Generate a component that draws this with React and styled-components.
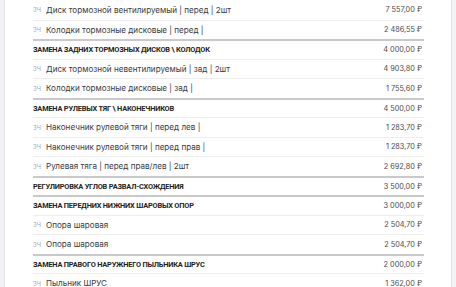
import React from "react";
import styled, { createGlobalStyle } from "styled-components";

const GlobalStyle = createGlobalStyle`
  html, body {
    margin: 0;
    padding: 0;
    background: #f3f3f6;
  }
  body {
    font-family: Inter, "Noto Sans", "Liberation Sans", sans-serif;
    -webkit-font-smoothing: antialiased;
  }
`;

const rows = [
  { type: "item", name: "Диск тормозной вентилируемый | перед | 2шт", price: "7 557,00 ₽" },
  { type: "item", name: "Колодки тормозные дисковые | перед |", price: "2 486,55 ₽" },
  { type: "group", name: "ЗАМЕНА ЗАДНИХ ТОРМОЗНЫХ ДИСКОВ \\ КОЛОДОК", price: "4 000,00 ₽" },
  { type: "item", name: "Диск тормозной невентилируемый | зад | 2шт", price: "4 903,80 ₽" },
  { type: "item", name: "Колодки тормозные дисковые | зад |", price: "1 755,60 ₽" },
  { type: "group", name: "ЗАМЕНА РУЛЕВЫХ ТЯГ \\ НАКОНЕЧНИКОВ", price: "4 500,00 ₽" },
  { type: "item", name: "Наконечник рулевой тяги | перед лев |", price: "1 283,70 ₽" },
  { type: "item", name: "Наконечник рулевой тяги | перед прав |", price: "1 283,70 ₽" },
  { type: "item", name: "Рулевая тяга | перед прав/лев | 2шт", price: "2 692,80 ₽" },
  { type: "group", name: "РЕГУЛИРОВКА УГЛОВ РАЗВАЛ-СХОЖДЕНИЯ", price: "3 500,00 ₽" },
  { type: "group", name: "ЗАМЕНА ПЕРЕДНИХ НИЖНИХ ШАРОВЫХ ОПОР", price: "3 000,00 ₽" },
  { type: "item", name: "Опора шаровая", price: "2 504,70 ₽" },
  { type: "item", name: "Опора шаровая", price: "2 504,70 ₽" },
  { type: "group", name: "ЗАМЕНА ПРАВОГО НАРУЖНЕГО ПЫЛЬНИКА ШРУС", price: "2 000,00 ₽" },
  { type: "item", name: "Пыльник ШРУС", price: "1 362,00 ₽" },
];

export default function App() {
  return (
    <>
      <GlobalStyle />
      <Page>
        <Sidebar />
        <Sheet>
          <Table>
            {rows.map((row, i) => (
              <Row key={i} $group={row.type === "group"} $first={i === 0}>
                {row.type === "item" && <Tag>ЗЧ</Tag>}
                <Name $group={row.type === "group"}>{row.name}</Name>
                <Price>{row.price}</Price>
              </Row>
            ))}
          </Table>
        </Sheet>
        <Gutter />
      </Page>
    </>
  );
}

const Page = styled.div`
  display: flex;
  width: 456px;
  height: 287px;
  overflow: hidden;
`;

const Sidebar = styled.div`
  width: 4px;
  flex: none;
  background: #f1f1f4;
  border-right: 1px solid #e6e6ea;
`;

const Sheet = styled.div`
  flex: 1;
  background: #ffffff;
  padding: 0 27px 0 28px;
`;

const Gutter = styled.div`
  width: 4px;
  flex: none;
  background: #f3f3f6;
  border-left: 1px solid #dedee3;
`;

const Table = styled.div`
  display: flex;
  flex-direction: column;
`;

const Row = styled.div`
  display: flex;
  align-items: center;
  box-sizing: border-box;
  height: 19.5px;
  flex: none;
  border-top: ${(p) =>
    p.$first ? "none" : p.$group ? "2px solid #c9c9cc" : "1px solid #ededee"};
`;

const Tag = styled.span`
  font-size: 6px;
  color: #a8a8ac;
  width: 13px;
  flex: none;
`;

const Name = styled.span`
  flex: 1;
  font-family: ${(p) => (p.$group ? "Roboto, 'Liberation Sans', sans-serif" : "inherit")};
  font-size: ${(p) => (p.$group ? "7.4px" : "8.1px")};
  font-weight: ${(p) => (p.$group ? 700 : 400)};
  letter-spacing: ${(p) => (p.$group ? "-0.2px" : "normal")};
  color: ${(p) => (p.$group ? "#1e1e20" : "#3a3a3d")};
  white-space: nowrap;
`;

const Price = styled.span`
  font-size: 7.3px;
  color: #4a4a4e;
  padding-right: 2px;
  white-space: nowrap;
`;
